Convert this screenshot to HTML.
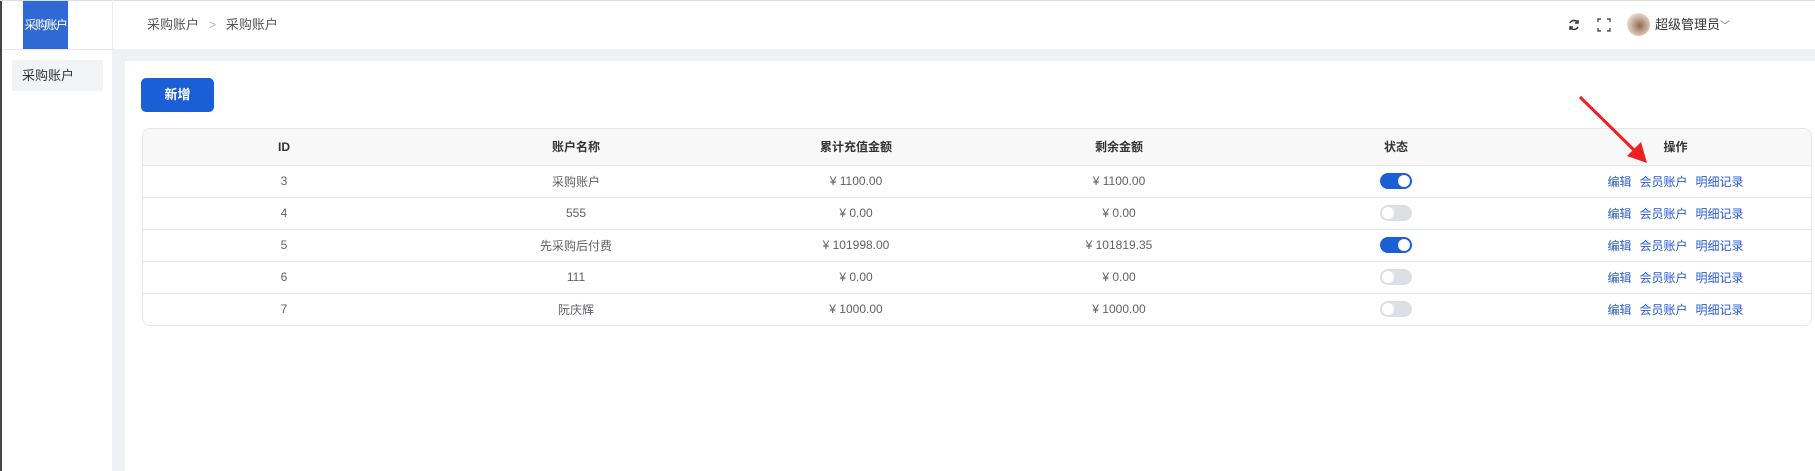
<!DOCTYPE html>
<html><head><meta charset="utf-8"><style>
*{box-sizing:border-box;margin:0;padding:0}
body{width:1815px;height:471px;overflow:hidden;background:#fff;font-family:"Liberation Sans","Noto Sans CJK SC",sans-serif;font-size:12px;color:#606266;position:relative}
.abs{position:absolute}
table{border-collapse:collapse;table-layout:fixed;width:1669px}
td,th{text-align:center;height:32px;border-bottom:1px solid #e4e6eb;font-weight:normal;padding:0}
th{height:36px;background:#f8f8f9;color:#333;font-weight:bold}
tr:last-child td{border-bottom:none}
.tg{display:inline-block;width:32px;height:16px;border-radius:8px;background:#dcdfe6;position:relative;vertical-align:middle}
.tg::after{content:"";position:absolute;left:2px;top:2px;width:12px;height:12px;border-radius:50%;background:#fff}
.tg.on{background:#1a5fd6}.tg.on::after{left:18px}
.a{color:#2a5bd7;margin:0 4px}
</style></head><body>
<div class="abs" style="left:0;top:0;width:2px;height:471px;background:#444"></div>
<div class="abs" style="left:0;top:0;width:1815px;height:1px;background:#ddd"></div>
<div class="abs" style="left:112px;top:0;width:1px;height:49px;background:#eee"></div>
<div class="abs" style="left:2px;top:49px;width:110px;height:1px;background:#e8e8ee"></div>
<div class="abs" style="left:23px;top:1px;width:45px;height:48px;background:#3068d4;color:#fff;font-size:12px;line-height:48px;text-align:center;letter-spacing:-1.5px;white-space:nowrap;overflow:visible">采购账户</div>
<div class="abs" style="left:12px;top:60px;width:91px;height:31px;background:#f2f3f5;color:#333;line-height:31px;padding-left:10px;font-size:13px">采购账户</div>
<div class="abs" style="left:147px;top:16px;color:#555;line-height:18px;font-size:13px">采购账户 <span style="color:#bbb;margin:0 6px">&gt;</span> 采购账户</div>
<div class="abs" style="left:112px;top:49px;width:1703px;height:422px;background:#f0f1f5"></div>
<div class="abs" style="left:125px;top:61px;width:1690px;height:410px;background:#fff"></div>
<svg class="abs" style="left:1567px;top:18px" width="14" height="14" viewBox="0 0 14 14" fill="none" stroke="#333" stroke-width="1.5"><path d="M11 5A4.5 4.5 0 0 0 3 5M3 9a4.5 4.5 0 0 0 8 0"/><path d="M11 2v3H8M3 12V9h3"/></svg>
<svg class="abs" style="left:1597px;top:18px" width="14" height="14" viewBox="0 0 14 14" fill="none" stroke="#333" stroke-width="1.2"><path d="M1 4V1h3M10 1h3v3M13 10v3h-3M4 13H1v-3"/></svg>
<div class="abs" style="left:1627px;top:13px;width:23px;height:23px;border-radius:50%;background:radial-gradient(circle at 55% 55%,#8a6b55 0,#c9b2a0 45%,#e8d6d0 70%)"></div>
<div class="abs" style="left:1655px;top:16px;color:#333;font-size:13px;line-height:18px">超级管理员<span style="font-size:10px;color:#666">﹀</span></div>
<div class="abs" style="left:141px;top:78px;width:73px;height:34px;background:#1a5fd6;border-radius:5px;color:#fff;font-weight:bold;text-align:center;line-height:34px;font-size:13px">新增</div>
<div class="abs" style="left:142px;top:128px;width:1670px;height:198px;border:1px solid #e4e6eb;border-radius:8px;overflow:hidden">
<table><colgroup><col style="width:282px"><col style="width:302px"><col style="width:258px"><col style="width:268px"><col style="width:286px"><col></colgroup>
<tr><th>ID</th><th>账户名称</th><th>累计充值金额</th><th>剩余金额</th><th>状态</th><th>操作</th></tr>
<tr><td>3</td><td>采购账户</td><td>¥ 1100.00</td><td>¥ 1100.00</td><td><span class="tg on"></span></td><td><span class="a">编辑</span><span class="a">会员账户</span><span class="a">明细记录</span></td></tr>
<tr><td>4</td><td>555</td><td>¥ 0.00</td><td>¥ 0.00</td><td><span class="tg"></span></td><td><span class="a">编辑</span><span class="a">会员账户</span><span class="a">明细记录</span></td></tr>
<tr><td>5</td><td>先采购后付费</td><td>¥ 101998.00</td><td>¥ 101819.35</td><td><span class="tg on"></span></td><td><span class="a">编辑</span><span class="a">会员账户</span><span class="a">明细记录</span></td></tr>
<tr><td>6</td><td>111</td><td>¥ 0.00</td><td>¥ 0.00</td><td><span class="tg"></span></td><td><span class="a">编辑</span><span class="a">会员账户</span><span class="a">明细记录</span></td></tr>
<tr><td>7</td><td>阮庆辉</td><td>¥ 1000.00</td><td>¥ 1000.00</td><td><span class="tg"></span></td><td><span class="a">编辑</span><span class="a">会员账户</span><span class="a">明细记录</span></td></tr>
</table></div>
<svg class="abs" style="left:1575px;top:90px" width="80" height="80"><path d="M5 7 L62 63" stroke="#f02020" stroke-width="3"/><path d="M72 73 L52 66 L66 52 Z" fill="#f02020"/></svg>
</body></html>
